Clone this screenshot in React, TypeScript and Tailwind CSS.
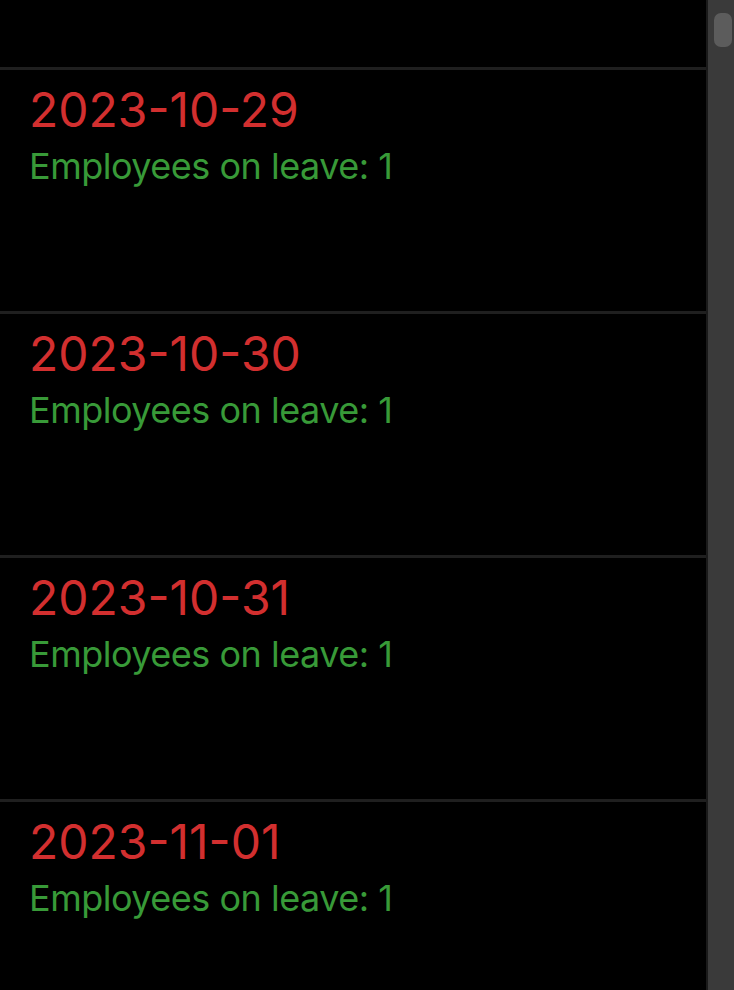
const days = ["2023-10-29", "2023-10-30", "2023-10-31", "2023-11-01"];

export default function App() {
  return (
    <div className="flex h-[990px] w-[734px] overflow-hidden bg-black font-['Inter','Noto_Sans',sans-serif]">
      <div className="flex-1">
        {/* row scrolled mostly out of view */}
        <div className="h-[70px] border-b-[3px] border-[#1f1f1f]" />
        {days.map((day) => (
          <div key={day} className="h-[244px] border-b-[3px] border-[#1f1f1f] px-[29px] pt-[10px]">
            <p className="text-[48px] leading-[60px] text-[#d22f2f]">{day}</p>
            <p className="mt-[3px] text-[36px] leading-[46px] tracking-[-0.5px] text-[#389a38]">
              Employees on leave: 1
            </p>
          </div>
        ))}
      </div>
      <div className="w-[28px] border-l-2 border-[#1a1a1a] bg-[#3a3a3a] pl-[6px] pr-[2px] pt-[13px]">
        <div className="h-[34px] rounded-[7px] bg-[#5c5c5c]" />
      </div>
    </div>
  );
}
